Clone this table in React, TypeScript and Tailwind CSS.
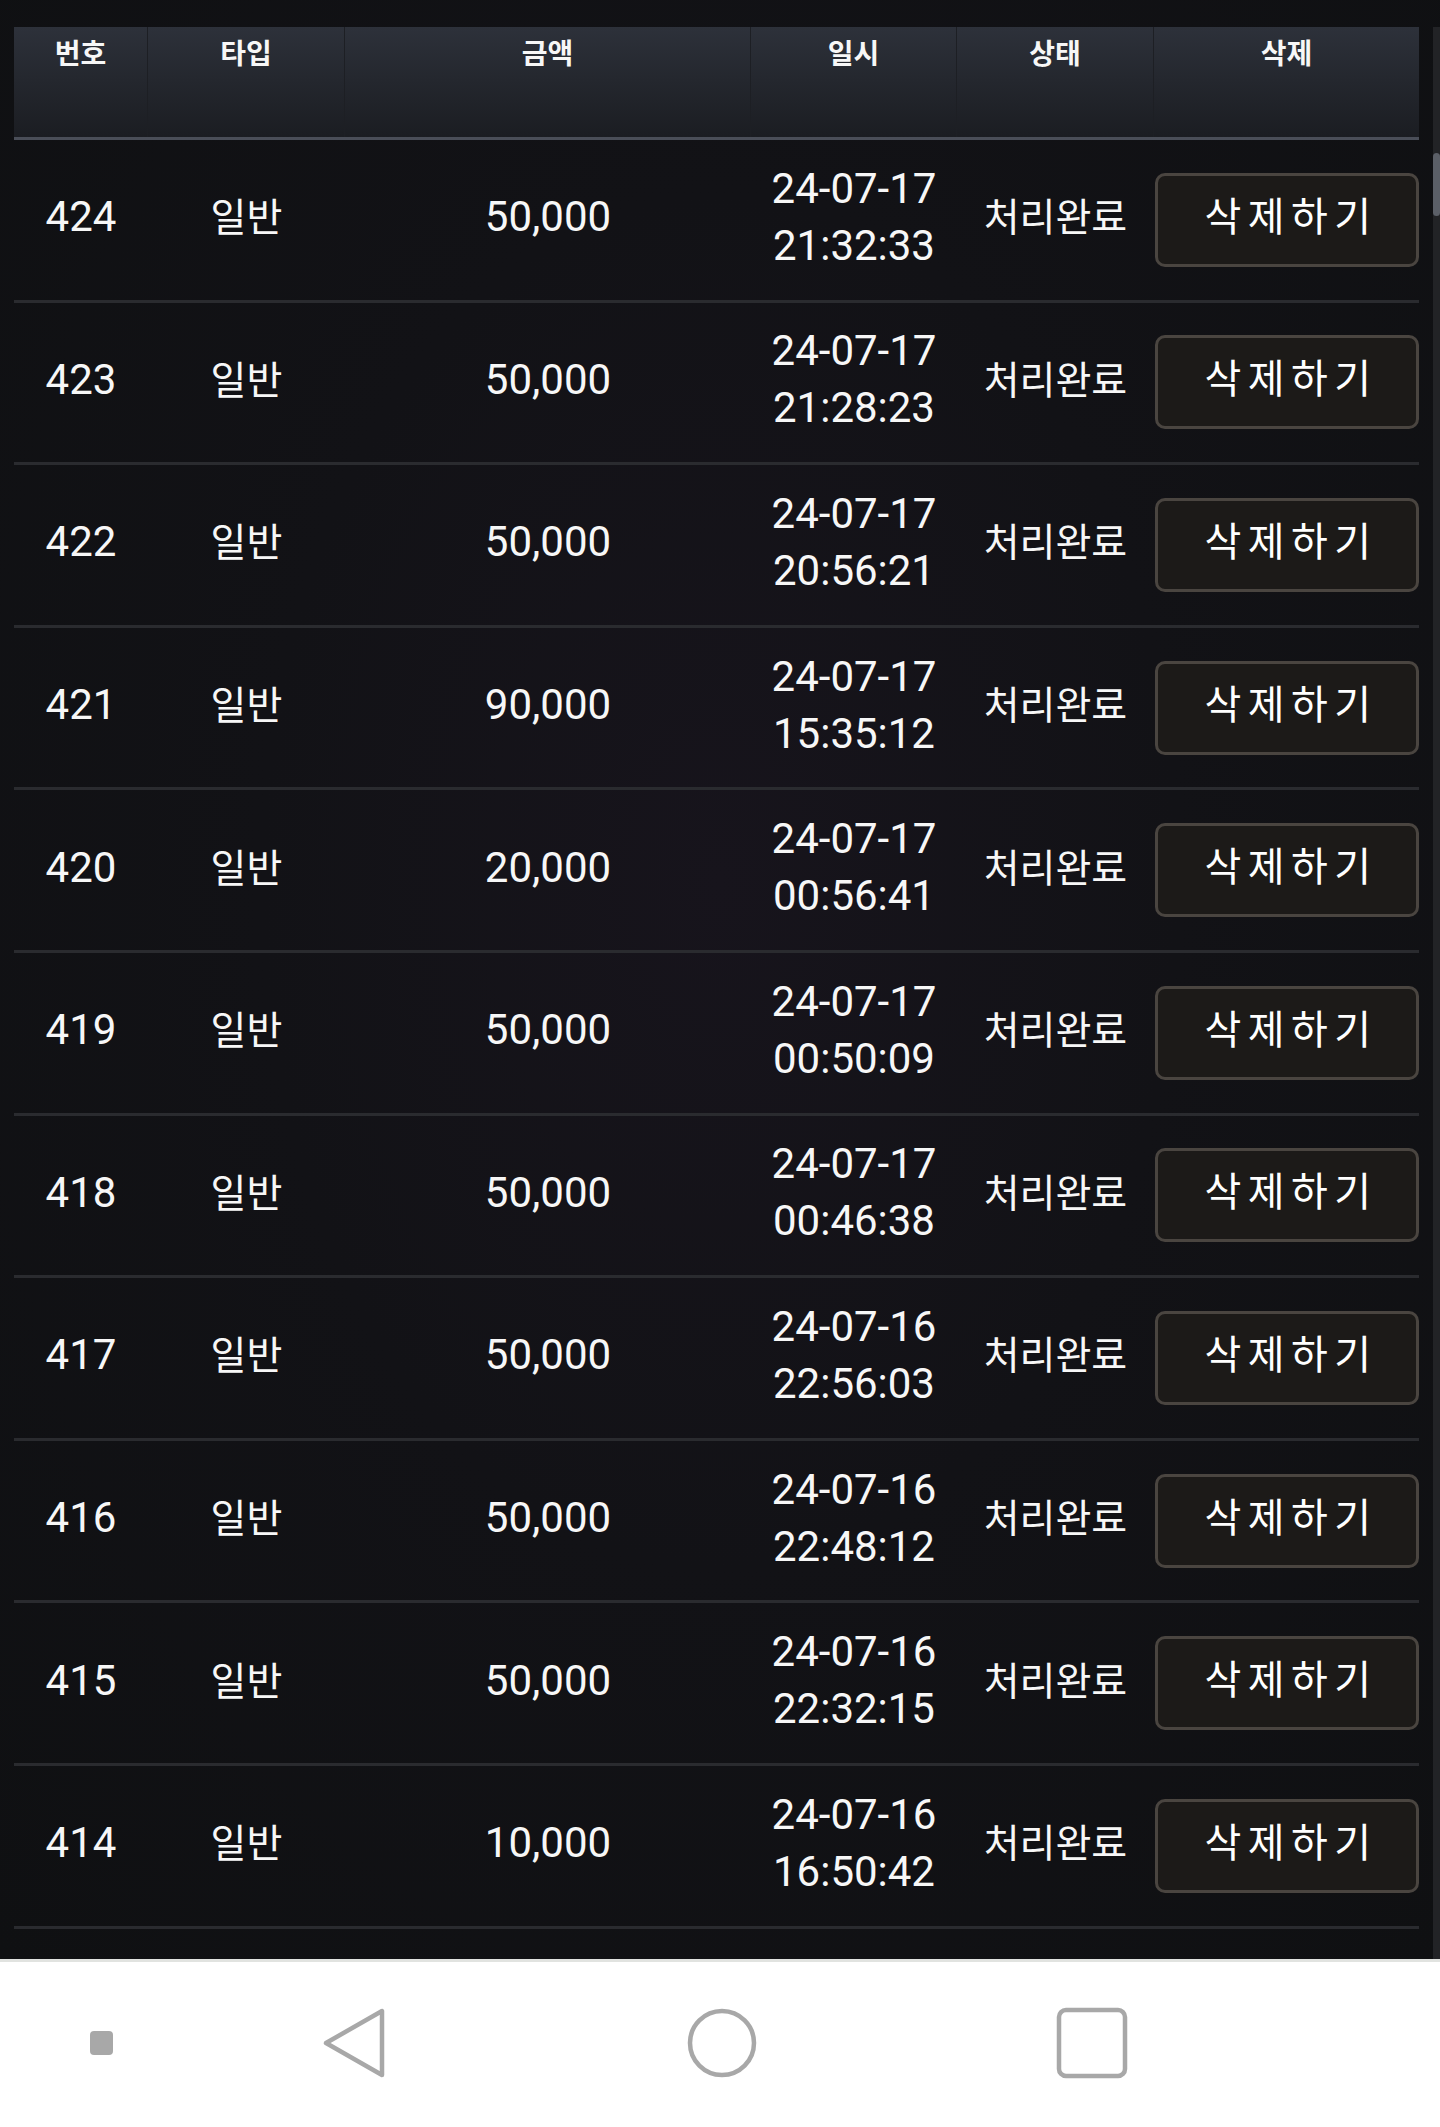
const rows = [
  ["424", "50,000", "24-07-17", "21:32:33"],
  ["423", "50,000", "24-07-17", "21:28:23"],
  ["422", "50,000", "24-07-17", "20:56:21"],
  ["421", "90,000", "24-07-17", "15:35:12"],
  ["420", "20,000", "24-07-17", "00:56:41"],
  ["419", "50,000", "24-07-17", "00:50:09"],
  ["418", "50,000", "24-07-17", "00:46:38"],
  ["417", "50,000", "24-07-16", "22:56:03"],
  ["416", "50,000", "24-07-16", "22:48:12"],
  ["415", "50,000", "24-07-16", "22:32:15"],
  ["414", "10,000", "24-07-16", "16:50:42"],
];

const heads = ["번호", "타입", "금액", "일시", "상태", "삭제"];
const cols = "grid grid-cols-[134px_197px_406px_206px_197px_265px]";

export default function App() {
  return (
    <div className="w-[1440px] h-[2127px] flex flex-col bg-[#111214] font-['Roboto','Noto_Sans_CJK_KR',sans-serif] text-[#f7f7f7]">
      <main className="flex-1 flex pt-[27px] pl-[14px] bg-[radial-gradient(ellipse_at_50%_45%,#17141c_0%,#121216_45%,#0f1012_100%)]">
        <div className="w-[1405px]">
          {/* header */}
          <div className={`${cols} h-[113px] border-b-[3px] border-[#4a4e58] bg-gradient-to-b from-[#2d313a] to-[#1b1d22]`}>
            {heads.map((h, i) => (
              <div key={h} className={`pt-[8px] text-center text-[28px] leading-[40px] font-bold ${i < 5 ? "border-r border-[#1d1f24]" : ""}`}>
                {h}
              </div>
            ))}
          </div>
          {/* rows */}
          {rows.map(([no, amt, d, t]) => (
            <div key={no} className={`${cols} h-[162.6px] border-b-[3px] border-[#2a2b2f] items-center`}>
              <div className="text-center text-[42px] leading-none -mt-[5px]">{no}</div>
              <div className="text-center text-[39px] leading-none -mt-[2px]">일반</div>
              <div className="text-center text-[42px] leading-none -mt-[5px]">{amt}</div>
              <div className="flex flex-col items-center text-[42px] leading-[57px] -mt-[6px]">
                <span>{d}</span>
                <span>{t}</span>
              </div>
              <div className="text-center text-[39px] leading-none -mt-[2px]">처리완료</div>
              <div className="flex justify-end">
                <button className="w-[264px] h-[94px] rounded-[10px] border-[3px] border-[#4a4540] bg-[#1c1a18] text-[40px] leading-none tracking-[0.16em] pl-[8px] pb-[4px] text-white">
                  삭제하기
                </button>
              </div>
            </div>
          ))}
        </div>
        {/* scrollbar */}
        <div className="ml-[14px] w-[7px] bg-[#222326] flex flex-col">
          <div className="mt-[126px] h-[63px] rounded-full bg-[#5b5f67]" />
        </div>
      </main>
      <nav className="h-[168px] shrink-0 border-t-[3px] border-[#e1e3e0] bg-white flex items-center pb-[4px] pl-[90px]">
        <div className="w-[23px] h-[24px] rounded-[4px] bg-[#a8a8a8]" />
        <svg className="ml-[208px]" width="66" height="72" viewBox="0 0 66 72" fill="none" stroke="#a8a8a8" strokeWidth="4.5" strokeLinejoin="round">
          <path d="M61 4 L61 68 L5 36 Z" />
        </svg>
        <svg className="ml-[299px]" width="72" height="72" viewBox="0 0 72 72" fill="none" stroke="#a8a8a8" strokeWidth="4.5">
          <circle cx="36" cy="36" r="32" />
        </svg>
        <svg className="ml-[298px]" width="72" height="72" viewBox="0 0 72 72" fill="none" stroke="#a8a8a8" strokeWidth="4.5">
          <rect x="3" y="3" width="66" height="66" rx="7" />
        </svg>
      </nav>
    </div>
  );
}
